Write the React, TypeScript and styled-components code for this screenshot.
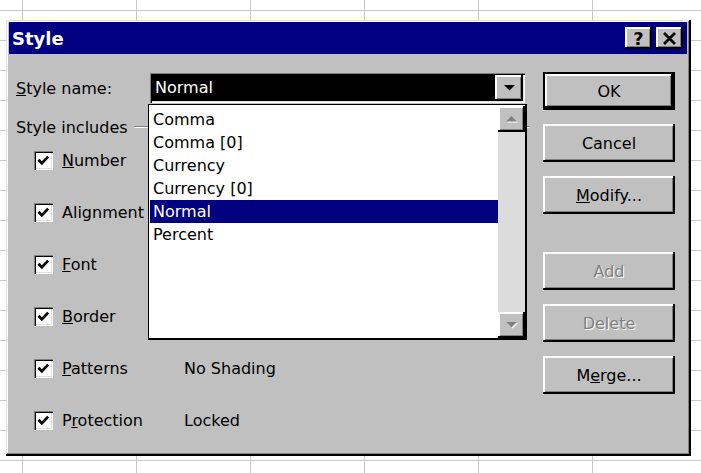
import styled, { createGlobalStyle, css } from 'styled-components';

const GlobalStyle = createGlobalStyle`
  html, body {
    margin: 0;
    padding: 0;
    background: #fff;
    overflow: hidden;
  }
  body {
    font-family: "DejaVu Sans", "Liberation Sans", sans-serif;
    font-size: 16px;
  }
`;

const raised = css`
  background: #c0c0c0;
  box-shadow: inset -2px -2px 0 #000, inset 2px 2px 0 #fff, inset -3px -3px 0 #808080;
`;

const sunken = css`
  box-shadow: inset 1px 1px 0 #808080, inset 2px 2px 0 #000, inset -1px -1px 0 #fff,
    inset -2px -2px 0 #dfdfdf;
`;

const STYLES = ['Comma', 'Comma [0]', 'Currency', 'Currency [0]', 'Normal', 'Percent'];

const INCLUDES = [
  { label: 'Number', key: 0, value: '' },
  { label: 'Alignment', key: -1, value: '' },
  { label: 'Font', key: 0, value: '' },
  { label: 'Border', key: 0, value: '' },
  { label: 'Patterns', key: 0, value: 'No Shading' },
  { label: 'Protection', key: 1, value: 'Locked' },
];

// underline one letter as the keyboard accelerator
const Accel = ({ text, at }: { text: string; at: number }) => {
  if (at < 0) return <>{text}</>;
  return (
    <>
      {text.slice(0, at)}
      <u>{text[at]}</u>
      {text.slice(at + 1)}
    </>
  );
};

const Triangle = ({ up, disabled }: { up?: boolean; disabled?: boolean }) => (
  <svg width="13" height="8" viewBox="0 0 13 8">
    {disabled && (
      <path d={up ? 'M2 7.5 L7.5 2 L13 7.5 Z' : 'M2 2 L13 2 L7.5 7.5 Z'} fill="#fff" />
    )}
    <path
      d={up ? 'M1 6.5 L6.5 1 L12 6.5 Z' : 'M1 1 L12 1 L6.5 6.5 Z'}
      fill={disabled ? '#808080' : '#000'}
    />
  </svg>
);

const App = () => {
  return (
    <>
      <GlobalStyle />
      <Sheet>
        <Dialog>
          <TitleBar>
            <Title>Style</Title>
            <TitleButtons>
              <CaptionButton>?</CaptionButton>
              <CaptionButton>
                <svg width="15" height="13" viewBox="0 0 15 13">
                  <path d="M2 1 L13 12 M13 1 L2 12" stroke="#000" strokeWidth="2.8" />
                </svg>
              </CaptionButton>
            </TitleButtons>
          </TitleBar>
          <Body>
            <LeftPane>
              <NameRow>
                <Label>
                  <Accel text="Style name:" at={0} />
                </Label>
                <Combo>
                  <ComboField>Normal</ComboField>
                  <ComboArrow>
                    <Triangle />
                  </ComboArrow>
                  <DropList>
                    <Items>
                      {STYLES.map((s) => (
                        <Item key={s} $selected={s === 'Normal'}>
                          {s}
                        </Item>
                      ))}
                    </Items>
                    <ScrollBar>
                      <ScrollButton>
                        <Triangle up disabled />
                      </ScrollButton>
                      <Track />
                      <ScrollButton>
                        <Triangle disabled />
                      </ScrollButton>
                    </ScrollBar>
                  </DropList>
                </Combo>
              </NameRow>
              <GroupHeader>
                <Label>Style includes</Label>
                <GroupLine />
              </GroupHeader>
              <CheckList>
                {INCLUDES.map((item) => (
                  <CheckRow key={item.label}>
                    <CheckBox>
                      <svg width="15" height="15" viewBox="0 0 15 15">
                        <polyline
                          points="2.5,6.8 5.8,10.2 12.2,3.6"
                          fill="none"
                          stroke="#000"
                          strokeWidth="2.7"
                        />
                      </svg>
                    </CheckBox>
                    <CheckLabel>
                      <Accel text={item.label} at={item.key} />
                    </CheckLabel>
                    <CheckValue>{item.value}</CheckValue>
                  </CheckRow>
                ))}
              </CheckList>
            </LeftPane>
            <ButtonColumn>
              <Button $default>OK</Button>
              <Button>Cancel</Button>
              <Button>
                <Accel text="Modify..." at={0} />
              </Button>
              <Button disabled $gapBefore>
                Add
              </Button>
              <Button disabled>Delete</Button>
              <Button>
                <Accel text="Merge..." at={1} />
              </Button>
            </ButtonColumn>
          </Body>
        </Dialog>
      </Sheet>
    </>
  );
};

const Sheet = styled.div`
  width: 701px;
  height: 473px;
  box-sizing: border-box;
  padding: 20px 0 0 6px;
  background-color: #fff;
  background-image: linear-gradient(to right, #c8c8c8 1px, transparent 1px),
    linear-gradient(to bottom, #c8c8c8 1px, transparent 1px);
  background-size: 114px 100%, 100% 30px;
  background-position: 22px 0, 0 10px;
`;

const Dialog = styled.div`
  width: 685px;
  height: 436px;
  box-sizing: border-box;
  padding: 2px 4px 4px 3px;
  display: flex;
  flex-direction: column;
  background: #c0c0c0;
  box-shadow: inset -2px -2px 0 #000, inset 1px 1px 0 #dfdfdf, inset -3px -3px 0 #808080,
    inset 2px 2px 0 #fff;
`;

const TitleBar = styled.div`
  height: 32px;
  flex: none;
  display: flex;
  align-items: center;
  justify-content: space-between;
  padding: 0 4px 0 3px;
  background: #000080;
`;

const Title = styled.div`
  color: #fff;
  font-weight: 700;
  font-size: 18px;
`;

const TitleButtons = styled.div`
  display: flex;
  gap: 4px;
`;

const CaptionButton = styled.div`
  ${raised};
  width: 27px;
  height: 22px;
  display: flex;
  align-items: center;
  justify-content: center;
  font-weight: 700;
  font-size: 18px;
  color: #000;
`;

const Body = styled.div`
  flex: 1;
  display: flex;
  color: #000;
`;

const LeftPane = styled.div`
  width: 521px;
  padding-left: 7px;
  box-sizing: border-box;
`;

const NameRow = styled.div`
  margin-top: 19px;
  height: 30px;
  display: flex;
  align-items: center;
`;

const Label = styled.div`
  width: 134px;
  flex: none;
  white-space: nowrap;
`;

const Combo = styled.div`
  ${sunken};
  position: relative;
  width: 375px;
  height: 30px;
  box-sizing: border-box;
  padding: 2px;
  display: flex;
  background: #c0c0c0;
`;

const ComboField = styled.div`
  flex: 1;
  background: #000;
  color: #fff;
  padding-left: 3px;
  line-height: 26px;
`;

const ComboArrow = styled.div`
  ${raised};
  width: 28px;
  display: flex;
  align-items: center;
  justify-content: center;
`;

const DropList = styled.div`
  position: absolute;
  top: 31px;
  left: -2px;
  width: 379px;
  height: 236px;
  box-sizing: border-box;
  background: #fff;
  border: 1px solid #000;
  border-right-width: 2px;
  border-bottom-width: 2px;
  padding: 1px 0 0 1px;
  display: flex;
  z-index: 2;
`;

const Items = styled.div`
  flex: 1;
  padding-top: 2px;
`;

const Item = styled.div<{ $selected?: boolean }>`
  height: 23px;
  line-height: 23px;
  padding-left: 3px;
  background: ${(p) => (p.$selected ? '#000080' : 'transparent')};
  color: ${(p) => (p.$selected ? '#fff' : '#000')};
`;

const ScrollBar = styled.div`
  width: 27px;
  display: flex;
  flex-direction: column;
  background: #dcdcdc;
`;

const ScrollButton = styled.div`
  ${raised};
  height: 26px;
  flex: none;
  display: flex;
  align-items: center;
  justify-content: center;
`;

const Track = styled.div`
  flex: 1;
`;

const GroupHeader = styled.div`
  margin-top: 12px;
  height: 24px;
  display: flex;
  align-items: center;

  ${Label} {
    width: auto;
    margin-right: 6px;
  }
`;

const GroupLine = styled.div`
  flex: 1;
  border-top: 1px solid #808080;
  border-bottom: 1px solid #fff;
`;

const CheckList = styled.div`
  margin-top: 8px;
  padding-left: 18px;
  display: flex;
  flex-direction: column;
  gap: 26px;
`;

const CheckRow = styled.div`
  height: 26px;
  display: flex;
  align-items: center;
`;

const CheckBox = styled.div`
  ${sunken};
  width: 19px;
  height: 19px;
  flex: none;
  box-sizing: border-box;
  padding: 2px;
  background: #fff;
  display: flex;
  margin-right: 9px;
`;

const CheckLabel = styled.div`
  width: 122px;
  white-space: nowrap;
`;

const CheckValue = styled.div`
  white-space: nowrap;
`;

const ButtonColumn = styled.div`
  margin-left: 13px;
  padding-top: 18px;
  display: flex;
  flex-direction: column;
  gap: 14px;
`;

const Button = styled.div<{ $default?: boolean; $gapBefore?: boolean; disabled?: boolean }>`
  ${raised};
  width: 132px;
  height: 38px;
  box-sizing: border-box;
  display: flex;
  align-items: center;
  justify-content: center;
  margin-top: ${(p) => (p.$gapBefore ? '24px' : '0')};
  border: ${(p) => (p.$default ? '2px solid #000' : 'none')};
  color: ${(p) => (p.disabled ? '#808080' : '#000')};
  text-shadow: ${(p) => (p.disabled ? '1px 1px 0 #fff' : 'none')};
`;

export default App;
